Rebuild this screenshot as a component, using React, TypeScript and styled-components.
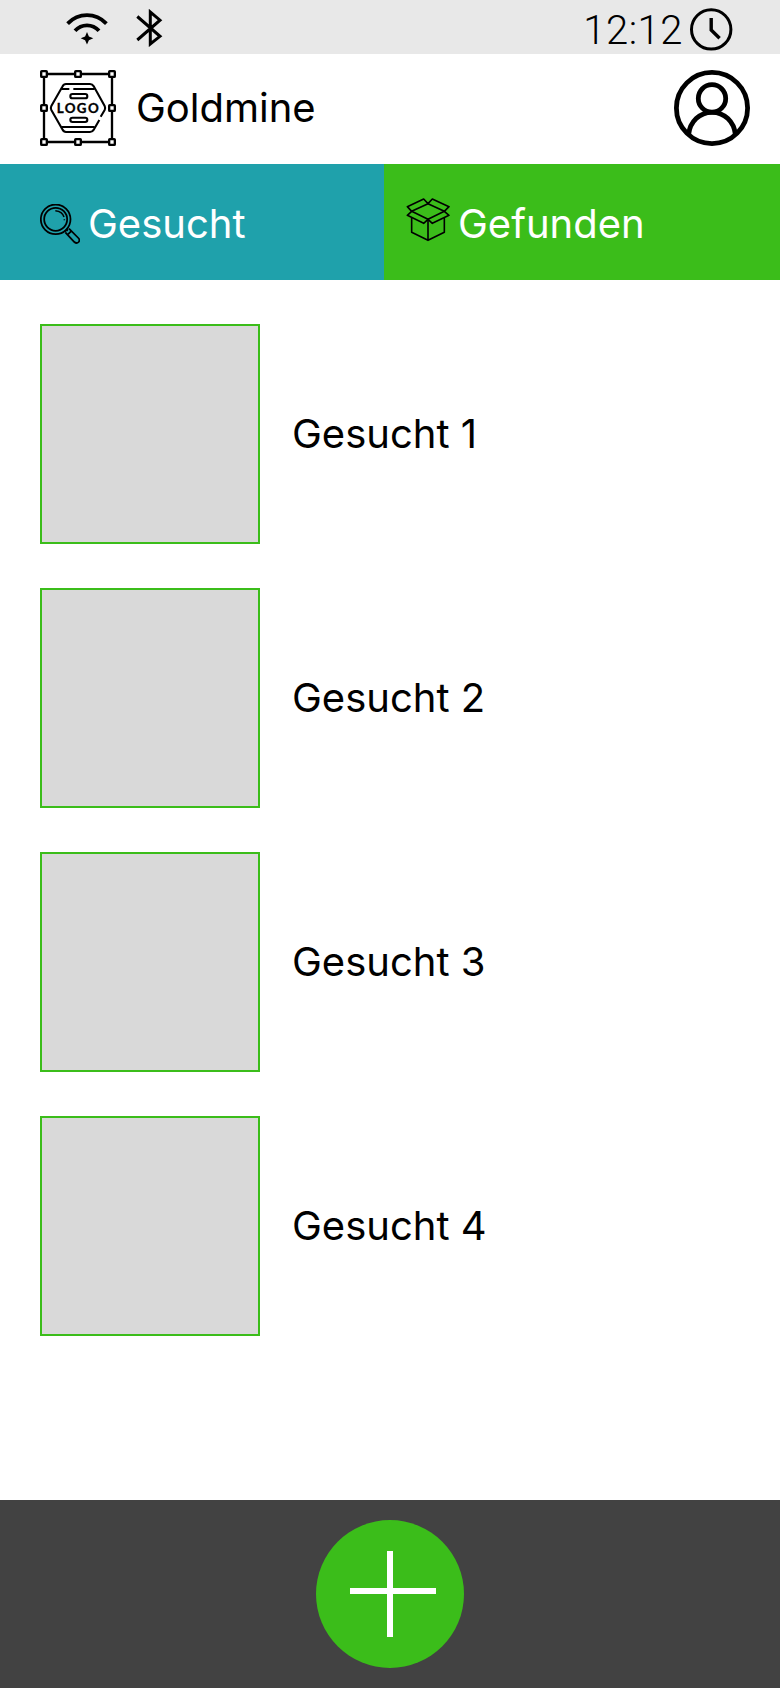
import React from "react";
import styled, { createGlobalStyle } from "styled-components";

const GlobalStyle = createGlobalStyle`
  *, *::before, *::after { box-sizing: border-box; }
  body {
    margin: 0;
    background: #fff;
    color: #000;
    font-family: Inter, "Liberation Sans", sans-serif;
    font-size: 40px;
    line-height: 48px;
  }
  svg { display: block; flex: none; }
`;

const Screen = styled.div`
  display: flex;
  flex-direction: column;
  width: 780px;
  height: 1688px;
  background: #fff;
`;

const StatusBar = styled.div`
  display: flex;
  align-items: center;
  justify-content: space-between;
  height: 54px;
  padding: 2px 47px 0 66px;
  background: #e8e8e8;
`;

const StatusGroup = styled.div<{ $gap: number }>`
  display: flex;
  align-items: center;
  gap: ${(p) => p.$gap}px;
`;

const Time = styled.span`
  font-family: Roboto, "Liberation Sans", sans-serif;
  font-weight: 300;
  letter-spacing: 0.5px;
  padding-top: 5px;
`;

const ClockSlot = styled.span`
  padding-top: 3px;
`;

const Header = styled.header`
  display: flex;
  align-items: center;
  height: 110px;
  padding: 0 30px 2px 40px;
`;

const Title = styled.h1`
  flex: 1;
  margin: 0 0 0 20px;
  font-size: 40px;
  font-weight: 400;
`;

const Tabs = styled.nav`
  display: flex;
  height: 116px;
`;

const Tab = styled.button<{ $color: string; $width?: number; $inset: number }>`
  display: flex;
  align-items: center;
  flex: ${(p) => (p.$width ? `0 0 ${p.$width}px` : "1")};
  gap: 8px;
  padding: 4px 0 0 ${(p) => p.$inset}px;
  border: 0;
  background: ${(p) => p.$color};
  color: #fff;
  font: inherit;
`;

const BoxSlot = styled.span`
  padding-bottom: 8px;
`;

const List = styled.ul`
  display: flex;
  flex-direction: column;
  flex: 1;
  gap: 44px;
  margin: 0;
  padding: 44px 40px;
  list-style: none;
`;

const Item = styled.li`
  display: flex;
  align-items: center;
  gap: 32px;
`;

const Thumb = styled.div`
  width: 220px;
  height: 220px;
  border: 2px solid #3bbd1a;
  background: #d9d9d9;
`;

const Footer = styled.footer`
  display: flex;
  align-items: center;
  justify-content: center;
  height: 188px;
  background: #424242;
`;

const AddButton = styled.button`
  display: flex;
  width: 148px;
  height: 148px;
  padding: 0;
  border: 0;
  border-radius: 50%;
  background: #3bbd1a;
`;

const WifiIcon = () => (
  <svg width="42" height="36" viewBox="66 10 42 36" fill="none" stroke="#000" strokeWidth="3.8">
    <path d="M67.6 23.6C78.5 12.4 95.5 12.4 106.4 23.6" />
    <path d="M75 30.8C81.5 23.6 92.5 23.6 99 30.8" />
    <path d="M87 32L88.9 36.4L93.3 38.3L88.9 40.2L87 44.6L85.1 40.2L80.7 38.3L85.1 36.4Z" fill="#000" stroke="none" />
  </svg>
);

const BluetoothIcon = () => (
  <svg width="28" height="38" viewBox="136 9 28 38" fill="none" stroke="#000" strokeWidth="3">
    <path d="M137.3 16.5L160 36.3L150.3 44V12L160 20.2L137.3 40" />
  </svg>
);

const ClockIcon = () => (
  <svg width="43" height="43" viewBox="690 8 43 43" fill="none" stroke="#000" strokeWidth="3">
    <circle cx="711.2" cy="29.4" r="19.7" />
    <path d="M711.2 18V30L719.6 38.3" strokeWidth="3.4" />
  </svg>
);

const LogoIcon = () => (
  <svg width="76" height="76" viewBox="30 30 228 228" fill="none" stroke="#000" strokeWidth="7">
    <path d="M53 42H132M156 42H235M53 246H132M156 246H235M42 53V132M42 156V235M246 53V132M246 156V235" />
    {[42, 144, 246].flatMap((y) =>
      [42, 144, 246]
        .filter((x) => !(x === 144 && y === 144))
        .map((x) => <rect key={`${x}-${y}`} x={x - 8.5} y={y - 8.5} width="17" height="17" rx="2" />)
    )}
    <path
      d="M212 170L224 150Q227 144 224 138L192 80Q187 72 180 72H108Q101 72 97 80L64 138Q61 144 64 150L97 208Q101 216 108 216H180Q187 216 192 208L208 180"
      strokeWidth="6.2"
    />
    <path d="M94 87H118M130 87H194M94 201H194" strokeWidth="6.2" />
    <rect x="121" y="102" width="51" height="13" rx="6.5" strokeWidth="6.2" />
    <rect x="121" y="173" width="51" height="13" rx="6.5" strokeWidth="6.2" />
    <text
      x="80"
      y="158"
      textLength="126"
      fill="#000"
      stroke="#000"
      strokeWidth="1"
      fontFamily="Lato, sans-serif"
      fontWeight="700"
      fontSize="40"
    >
      LOGO
    </text>
  </svg>
);

const UserIcon = () => (
  <svg width="76" height="76" viewBox="674 70 76 76" fill="none" stroke="#000" strokeWidth="4.8">
    <circle cx="712" cy="108" r="35.6" />
    <circle cx="712" cy="98.4" r="13.7" />
    <path d="M688.6 134.5C690 121.5 699.5 112.3 712 112.3S734 121.5 735.4 134.5" />
  </svg>
);

const SearchIcon = () => (
  <svg width="40" height="40" viewBox="30 42 120 120" fill="none" stroke="#000" strokeWidth="5.3">
    <circle cx="77" cy="88" r="44.5" />
    <circle cx="77" cy="88" r="34.5" />
    <path d="M76 62Q97 64 102 81M103 88V91" strokeWidth="4.5" />
    <path d="M104 125L114 115M109 119L113 123" />
    <path d="M106 127L133 156Q140 162 146 156Q151 150 145 144L117 116M113 134L123 124" />
  </svg>
);

const BoxIcon = () => (
  <svg width="44" height="44" viewBox="108 130 132 132" fill="none" stroke="#000" strokeWidth="4.8" strokeLinejoin="round">
    <path d="M174 147L125 170L174 194L223 170Z" />
    <path d="M174 147L161 133L112 156L125 170L112 182L161 206L174 194L187 206L237 182L223 170L237 156L187 133Z" />
    <path d="M125 190V233L174 257L223 233V190M174 194V257" />
  </svg>
);

const PlusIcon = () => (
  <svg width="148" height="148" viewBox="0 0 148 148" fill="#fff">
    <rect x="71" y="31" width="6" height="86" />
    <rect x="34" y="68" width="86" height="6" />
  </svg>
);

const items = ["Gesucht 1", "Gesucht 2", "Gesucht 3", "Gesucht 4"];

export default function App() {
  return (
    <>
      <GlobalStyle />
      <Screen>
        <StatusBar>
          <StatusGroup $gap={28}>
            <WifiIcon />
            <BluetoothIcon />
          </StatusGroup>
          <StatusGroup $gap={7}>
            <Time>12:12</Time>
            <ClockSlot>
              <ClockIcon />
            </ClockSlot>
          </StatusGroup>
        </StatusBar>
        <Header>
          <LogoIcon />
          <Title>Goldmine</Title>
          <UserIcon />
        </Header>
        <Tabs>
          <Tab $color="#1fa1ab" $width={384} $inset={40}>
            <SearchIcon />
            Gesucht
          </Tab>
          <Tab $color="#3bbd1a" $inset={22}>
            <BoxSlot>
              <BoxIcon />
            </BoxSlot>
            Gefunden
          </Tab>
        </Tabs>
        <List>
          {items.map((name) => (
            <Item key={name}>
              <Thumb />
              <span>{name}</span>
            </Item>
          ))}
        </List>
        <Footer>
          <AddButton aria-label="Hinzufügen">
            <PlusIcon />
          </AddButton>
        </Footer>
      </Screen>
    </>
  );
}
